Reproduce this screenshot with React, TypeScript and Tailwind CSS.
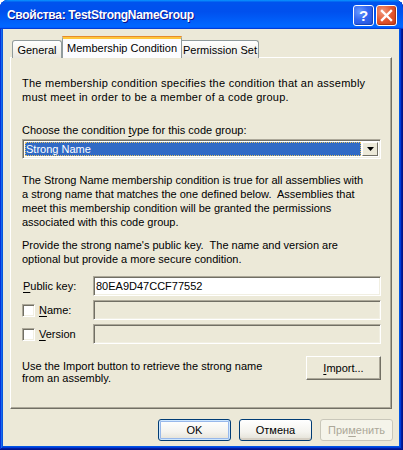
import React from "react";

const sunken =
  "border border-t-[#ACA899] border-l-[#ACA899] border-b-white border-r-white shadow-[inset_1px_1px_0_#716F64,inset_-1px_-1px_0_#F1EFE2]";

function U({ children }: { children: React.ReactNode }) {
  return <span className="underline underline-offset-[2px]">{children}</span>;
}

function TitleBar() {
  return (
    <div className="h-[29px] shrink-0 flex items-center pl-[7px] pr-[6px] rounded-t-[8px] bg-[linear-gradient(to_bottom,#0997FF_0%,#0053EE_8%,#0050EE_40%,#0066FF_88%,#0066FF_93%,#005BFF_95%,#003DD7_96%,#003DD7_100%)]">
      <span className="flex-1 text-white font-bold text-[12px] tracking-[-0.3px] [text-shadow:1px_1px_#0F1089] font-['Liberation_Sans',Arial,sans-serif]">
        Свойства: TestStrongNameGroup
      </span>
      <div className="flex gap-[2px] mt-[1px]">
        <div className="w-[21px] h-[21px] rounded-[3px] border border-white flex items-center justify-center bg-[radial-gradient(circle_at_30%_30%,#6A9BFF_0%,#3366F0_45%,#2252D8_100%)] shadow-[inset_-1px_-1px_1px_#1542B8]">
          <span className="text-white font-bold text-[15px] leading-none font-['Liberation_Sans',Arial,sans-serif] mt-[1px]">?</span>
        </div>
        <div className="w-[21px] h-[21px] rounded-[3px] border border-white flex items-center justify-center bg-[radial-gradient(circle_at_30%_30%,#F29A7C_0%,#E2562F_50%,#C63C18_100%)] shadow-[inset_-1px_-1px_1px_#A93312]">
          <svg width="13" height="13" viewBox="0 0 13 13">
            <path d="M2 2 L11 11 M11 2 L2 11" stroke="white" strokeWidth="2.4" strokeLinecap="square" />
          </svg>
        </div>
      </div>
    </div>
  );
}

function Tabs() {
  return (
    <div className="flex items-end pl-[9px] h-[22px] relative z-10">
      <div className="w-[50px] h-[18px] border border-b-0 border-[#919B9C] rounded-t-[3px] bg-[linear-gradient(to_bottom,#FFFFFF,#F3F2EC_60%,#E9E7DF)] flex items-center justify-center mb-[-1px]">
        General
      </div>
      <div className="w-[120px] h-[22px] border-x border-[#919B9C] rounded-t-[3px] bg-[#FCFCFE] flex flex-col mb-[-1px]">
        <div className="h-[1px] bg-[#E68B2C] rounded-t-[3px] mx-[-1px]" />
        <div className="h-[2px] bg-[#FFC73C]" />
        <div className="flex-1 flex items-center justify-center pb-[1px]">Membership Condition</div>
      </div>
      <div className="w-[77px] h-[18px] border border-b-0 border-l-0 border-[#919B9C] rounded-tr-[3px] bg-[linear-gradient(to_bottom,#FFFFFF,#F3F2EC_60%,#E9E7DF)] flex items-center justify-center mb-[-1px]">
        Permission Set
      </div>
    </div>
  );
}

function XpButton({ children, primary, disabled }: { children: React.ReactNode; primary?: boolean; disabled?: boolean }) {
  if (disabled) {
    return (
      <div className="w-[73px] h-[22px] rounded-[3px] border border-[#C9C7BA] bg-[#F5F4EA] text-[#ACA899] flex items-center justify-center">
        {children}
      </div>
    );
  }
  return (
    <div
      className={
        "w-[73px] h-[22px] rounded-[3px] border border-[#003C74] bg-[linear-gradient(to_bottom,#FFFFFF,#F4F3EE_60%,#E3E0D6)] flex items-center justify-center " +
        (primary ? "shadow-[inset_0_0_0_1px_#CEE7FF,inset_0_0_0_2px_#98B8EA]" : "shadow-[inset_0_-2px_0_#D6D0C5]")
      }
    >
      {children}
    </div>
  );
}

function Row({ label, check, value, disabled }: { label: React.ReactNode; check?: boolean; value?: string; disabled?: boolean }) {
  return (
    <div className="flex items-center h-[20px]">
      <div className="w-[71px] flex items-center">
        {check && <div className={"w-[13px] h-[13px] bg-white mr-[4px] " + sunken} />}
        <span className={check ? "" : "ml-[1px]"}>{label}</span>
      </div>
      <div className={"flex-1 h-[20px] flex items-center pl-[2px] " + sunken + (disabled ? " bg-[#ECE9D8]" : " bg-white")}>
        {value}
      </div>
    </div>
  );
}

export default function App() {
  return (
    <div className="w-[403px] h-[450px] flex flex-col rounded-t-[8px] bg-[#0054E3] shadow-[inset_-1px_-1px_#00138C,inset_1px_1px_#0831D9,inset_-2px_-2px_#001EA0,inset_2px_2px_#166AEE,inset_-3px_-3px_#003BDA,inset_3px_3px_#0855DD] text-[11px] text-black font-['Liberation_Sans',Arial,sans-serif] leading-[14px]">
      <TitleBar />
      <div className="flex-1 ml-[3px] mr-[4px] mb-[4px] bg-[#ECE9D8] flex flex-col pt-[6px]">
        <Tabs />
        <div className="ml-[7px] w-[382px] h-[352px] border border-t-white border-l-white border-b-[#716F64] border-r-[#716F64] shadow-[inset_-1px_-1px_0_#ACA899] pl-[11px] pr-[10px] pt-[18px] flex flex-col">
          <p className="whitespace-pre tracking-[0.25px]">
            The membership condition specifies the condition that an assembly{"\n"}must meet in order to be a member of a code group.
          </p>
          <p className="mt-[19px] whitespace-pre">
            Choose the condition <U>t</U>ype for this code group:
          </p>
          <div className={"mt-[2px] h-[20px] flex items-stretch bg-white p-[2px] " + sunken}>
            <div className="flex-1 bg-[#316AC5] text-white flex items-center pl-[1px] outline outline-1 outline-dotted outline-[#E5C365] -outline-offset-1">
              Strong Name
            </div>
            <div className="w-[16px] ml-[1px] bg-[#ECE9D8] border border-t-white border-l-white border-b-[#716F64] border-r-[#716F64] flex items-center justify-center">
              <svg width="7" height="4" viewBox="0 0 7 4">
                <path d="M0 0 H7 L3.5 4 Z" fill="black" />
              </svg>
            </div>
          </div>
          <p className="mt-[14px] whitespace-pre">
            The Strong Name membership condition is true for all assemblies with{"\n"}a strong name that matches the one defined below.  Assemblies that{"\n"}meet this membership condition will be granted the permissions{"\n"}associated with this code group.
          </p>
          <p className="mt-[9px] whitespace-pre">
            Provide the strong name's public key.  The name and version are{"\n"}optional but provide a more secure condition.
          </p>
          <div className="mt-[10px] flex flex-col gap-[4px]">
            <Row label={<><U>P</U>ublic key:</>} value="80EA9D47CCF77552" />
            <Row label={<><U>N</U>ame:</>} check disabled />
            <Row label={<><U>V</U>ersion</>} check disabled />
          </div>
          <div className="mt-[12px] flex items-start justify-between">
            <p className="whitespace-pre leading-[12px] pt-[4px]">
              Use the Import button to retrieve the strong name{"\n"}from an assembly.
            </p>
            <div className="w-[75px] h-[24px] bg-[#ECE9D8] border border-t-white border-l-white border-b-[#716F64] border-r-[#716F64] shadow-[inset_-1px_-1px_0_#ACA899] flex items-center justify-center">
              <span><U>I</U>mport...</span>
            </div>
          </div>
        </div>
        <div className="mt-[10px] flex justify-end gap-[8px] pr-[6px]">
          <XpButton primary>OK</XpButton>
          <XpButton>Отмена</XpButton>
          <XpButton disabled>
            <span>При<U>м</U>енить</span>
          </XpButton>
        </div>
      </div>
    </div>
  );
}
